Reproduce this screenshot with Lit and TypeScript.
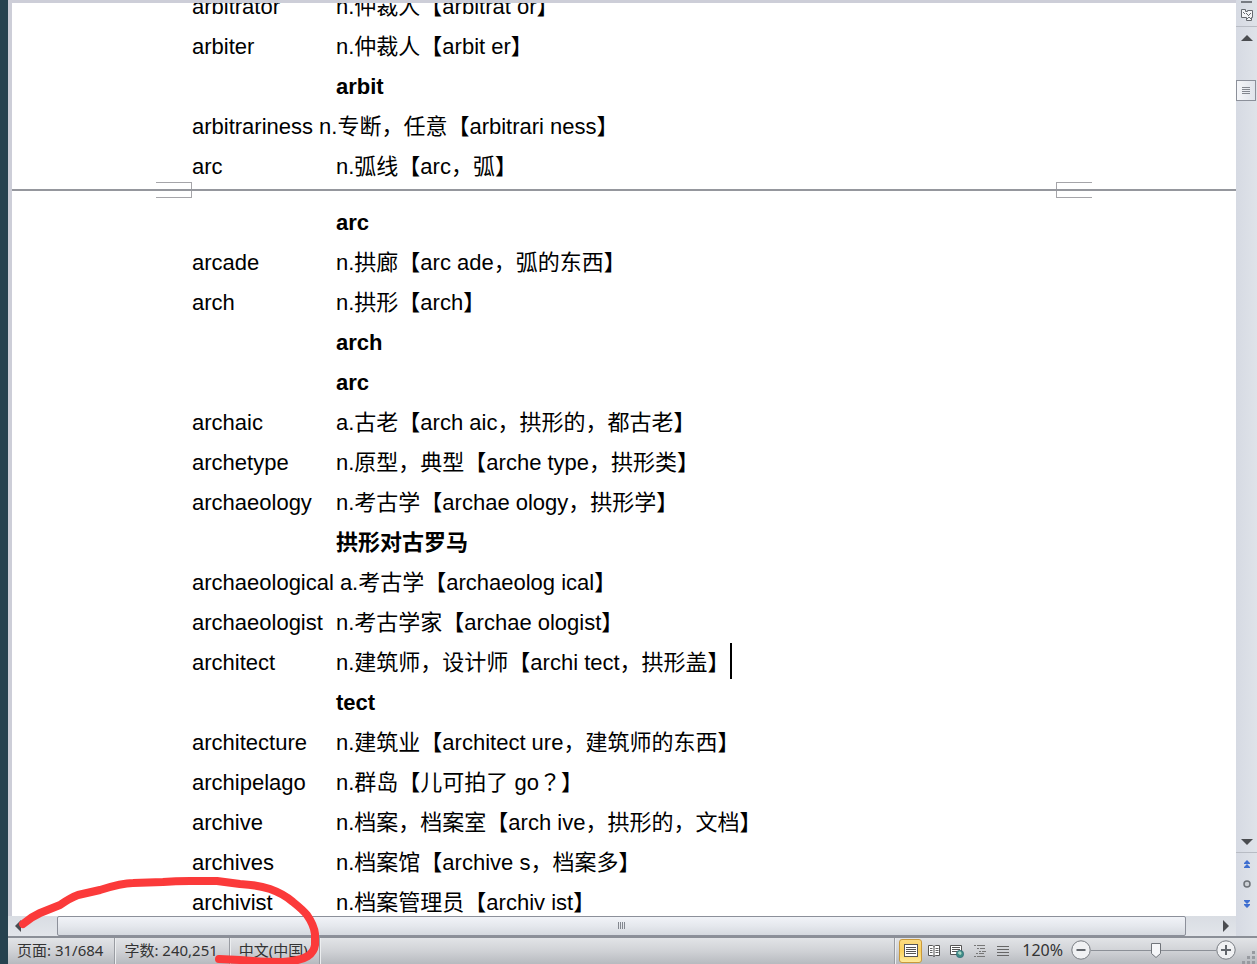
import { LitElement, html, css, svg } from "lit";
import { customElement, state } from "lit/decorators.js";

interface Entry {
  word?: string;
  meaning: string;
}

const PAGE_ONE: Entry[] = [
  { word: "arbitrator", meaning: "n.仲裁人【arbitrat or】" },
  { word: "arbiter", meaning: "n.仲裁人【arbit er】" },
  { meaning: "arbit" },
  { word: "arbitrariness", meaning: "n.专断，任意【arbitrari ness】" },
  { word: "arc", meaning: "n.弧线【arc，弧】" },
];

const PAGE_TWO: Entry[] = [
  { meaning: "arc" },
  { word: "arcade", meaning: "n.拱廊【arc ade，弧的东西】" },
  { word: "arch", meaning: "n.拱形【arch】" },
  { meaning: "arch" },
  { meaning: "arc" },
  { word: "archaic", meaning: "a.古老【arch aic，拱形的，都古老】" },
  { word: "archetype", meaning: "n.原型，典型【arche type，拱形类】" },
  { word: "archaeology", meaning: "n.考古学【archae ology，拱形学】" },
  { meaning: "拱形对古罗马" },
  { word: "archaeological", meaning: "a.考古学【archaeolog ical】" },
  { word: "archaeologist", meaning: "n.考古学家【archae ologist】" },
  { word: "architect", meaning: "n.建筑师，设计师【archi tect，拱形盖】" },
  { meaning: "tect" },
  { word: "architecture", meaning: "n.建筑业【architect ure，建筑师的东西】" },
  { word: "archipelago", meaning: "n.群岛【儿可拍了 go？】" },
  { word: "archive", meaning: "n.档案，档案室【arch ive，拱形的，文档】" },
  { word: "archives", meaning: "n.档案馆【archive s，档案多】" },
  { word: "archivist", meaning: "n.档案管理员【archiv ist】" },
];

/* Words followed by a plain space instead of a tab stop. */
const UNTABBED = new Set(["arbitrariness", "archaeological"]);

const VIEWS = [
  {
    label: "页面视图",
    icon: svg`<rect x="1.5" y="1.5" width="13" height="12" fill="#fff" stroke="#555"/>
      <path d="M3 4.5h10M3 6.5h10M3 8.5h10M3 10.5h10" stroke="#555"/>`,
  },
  {
    label: "阅读版式",
    icon: svg`<path d="M2.500 2.500h4l1.500 1 1.500-1h4v10h-4l-1.500 1-1.500-1h-4zM8 3.500v10" fill="#fff" stroke="#555"/>
      <path d="M4 5.500h2.500M4 7.500h2.500M4 9.500h2.500M9.500 5.500h3M9.500 7.500h3M9.500 9.500h3" stroke="#666"/>`,
  },
  {
    label: "Web 版式",
    icon: svg`<path d="M1.500 2.500h11v9h-11z" fill="#fff" stroke="#555"/>
      <path d="M3 4.500h8M3 6.500h8M3 8.500h5" stroke="#555"/>
      <circle cx="11" cy="11" r="3.700" fill="#3f8c86" stroke="#2c6573" stroke-width=".6"/>
      <path d="M8.500 10q2-3 3.500-1t-1 3z" fill="#a8d6c4"/>`,
  },
  {
    label: "大纲视图",
    icon: svg`<path d="M2 2.500h2M5 2.500h8M5 5.500h2M8 5.500h5M7 8.500h2M10 8.500h4M4 10.500h2M7 10.500h5M2 13.500h2M5 13.500h8" stroke="#777"/>`,
  },
  {
    label: "草稿",
    icon: svg`<path d="M2 3.500h12M2 6.500h12M2 9.500h12M2 12.500h12" stroke="#666"/>`,
  },
];

@customElement("app-root")
export class AppRoot extends LitElement {
  static styles = css`
    :host {
      display: block;
      height: 100vh;
      overflow: hidden;
      font-family: "Liberation Sans", "Noto Sans CJK SC", sans-serif;
      color: #000;
    }
    button {
      margin: 0;
      padding: 0;
      border: 0;
      background: none;
      display: flex;
      align-items: center;
      justify-content: center;
      font: inherit;
      color: inherit;
    }
    svg {
      display: block;
    }
    .desktop {
      height: 100%;
      box-sizing: border-box;
      padding-left: 8px;
      background: #26424f;
      position: relative;
    }
    .window {
      height: 100%;
      display: flex;
      flex-direction: column;
      background: #cdced8;
    }
    .work {
      flex: 1;
      min-height: 0;
      display: flex;
      border-bottom: 2px solid #8b8f97;
    }
    .pane {
      flex: 1;
      min-width: 0;
      display: flex;
      flex-direction: column;
    }
    .viewport {
      flex: 1;
      min-height: 0;
      overflow: hidden;
      margin: 3px 0 0 4px;
      background: #fff;
    }
    .pages {
      margin-top: -16px;
      font-size: 22px;
      line-height: 40px;
      white-space: nowrap;
    }
    .list {
      margin: 0;
      padding-left: 180px;
    }
    .row {
      display: flex;
      gap: 6px;
      height: 40px;
    }
    .word {
      min-width: 138px;
    }
    .word.untabbed {
      min-width: 0;
    }
    .meaning {
      margin: 0;
      display: flex;
    }
    .note {
      font-weight: bold;
    }
    .centred {
      font-family: "Noto Sans CJK TC", sans-serif;
      line-height: 22px;
    }
    .caret {
      width: 2px;
      height: 36px;
      background: #000;
    }
    .break {
      height: 16px;
      position: relative;
    }
    .rule {
      position: absolute;
      left: 0;
      right: 0;
      top: 2px;
      height: 2px;
      background: #95979d;
    }
    .corner {
      position: absolute;
      top: -5px;
      width: 35px;
      height: 14px;
      border: 1px solid #a5a5a9;
    }
    .corner.start {
      left: 144px;
      border-left: 0;
    }
    .corner.end {
      right: 144px;
      border-right: 0;
    }
    .hbar {
      height: 20px;
      display: flex;
      background: linear-gradient(#d9dde3, #e2e5ea);
    }
    .hbar .arrow {
      width: 20px;
    }
    .htrack {
      flex: 1;
      padding: 0 30px 0 29px;
      display: flex;
    }
    .htrack .thumb {
      flex: 1;
      border-radius: 2px;
      background: linear-gradient(#f1f3f8, #e5e8ed 50%, #d5d9df);
    }
    .thumb {
      box-sizing: border-box;
      border: 1px solid #8c909a;
      display: flex;
      align-items: center;
      justify-content: center;
    }
    .vbar {
      width: 21px;
      display: flex;
      flex-direction: column;
      background: linear-gradient(90deg, #d6dae3, #dfe3e9);
    }
    .split {
      height: 3px;
      background: #777b82 content-box;
      padding: 1px 5px 0;
      box-sizing: border-box;
    }
    .ruler {
      height: 24px;
      border-bottom: 1px solid #b8bcc4;
      box-sizing: border-box;
    }
    .vbar .arrow {
      height: 21px;
    }
    .vtrack {
      flex: 1;
      padding-top: 32px;
    }
    .vtrack .thumb {
      width: 20px;
      height: 21px;
      background: linear-gradient(90deg, #f5f6f9, #e0e4eb);
    }
    .browse {
      border-top: 1px solid #b8bcc4;
      height: 84px;
      padding-top: 1px;
      box-sizing: border-box;
    }
    .browse button {
      width: 100%;
      height: 20px;
    }
    .status {
      height: 26px;
      display: flex;
      background: linear-gradient(#e2e4e7, #d0d2d6 50%, #b7babf);
      font-family: "Noto Sans", "Noto Sans CJK SC", sans-serif;
      font-size: 15px;
      line-height: 24px;
      color: #333;
      white-space: nowrap;
    }
    .cell {
      padding: 0 11px 0 9px;
      border-right: 1px solid #999ca2;
      box-shadow: 1px 0 #eceef0;
    }
    .fill {
      flex: 1;
      border-right: 1px solid #999ca2;
      box-shadow: 1px 0 #eceef0;
    }
    .views {
      display: flex;
      padding-left: 4px;
    }
    .view {
      width: 23px;
      height: 24px;
      margin-top: 1px;
      box-sizing: border-box;
    }
    .view.on {
      border: 1px solid #c9993a;
      border-radius: 3px;
      background: linear-gradient(#fbdc82, #fbd25e 50%, #fdea9b);
    }
    .percent {
      padding: 0 8px;
      font-size: 16px;
    }
    .zoom {
      display: flex;
      height: 24px;
      align-items: center;
    }
    .range {
      appearance: none;
      width: 125px;
      height: 20px;
      margin: 0;
      background: linear-gradient(#8c9097, #8c9097) center / 100% 1px no-repeat;
    }
    .range::-webkit-slider-thumb {
      appearance: none;
      width: 12px;
      height: 17px;
      background: url("data:image/svg+xml,%3Csvg xmlns='http://www.w3.org/2000/svg' width='12' height='17'%3E%3Cpath d='M1.5 1.5h9v10l-4.500 4-4.500-4z' fill='%23f5f6f8' stroke='%2370747a'/%3E%3C/svg%3E") no-repeat;
    }
    .grip {
      width: 21px;
      display: flex;
      align-items: flex-end;
      justify-content: flex-end;
    }
    .ink {
      position: absolute;
      left: 0;
      bottom: 0;
      pointer-events: none;
    }
  `;

  @state() private view = 0;
  @state() private zoom = 120;

  private meaning(text: string) {
    const [before, after] = text.split("？");
    return after === undefined
      ? html`<span>${text}</span>`
      : html`<span>${before}<span class="centred">？</span>${after}</span>`;
  }

  private row(entry: Entry) {
    if (!entry.word) {
      return html`<div class="row">
        <dt class="word"></dt>
        <dd class="meaning note">${entry.meaning}</dd>
      </div>`;
    }
    return html`<div class="row">
      <dt class="word ${UNTABBED.has(entry.word) ? "untabbed" : ""}">${entry.word}</dt>
      <dd class="meaning">
        ${this.meaning(entry.meaning)}${entry.word === "architect" ? html`<span class="caret"></span>` : ""}
      </dd>
    </div>`;
  }

  private arrow(label: string, d: string) {
    return html`<button class="arrow" aria-label=${label}>
      <svg width="12" height="12"><path d=${d} fill="#4a4c50" /></svg>
    </button>`;
  }

  render() {
    return html`
      <div class="desktop">
        <div class="window">
          <div class="work">
            <div class="pane">
              <main class="viewport">
                <div class="pages">
                  <dl class="list">${PAGE_ONE.map((e) => this.row(e))}</dl>
                  <div class="break">
                    <span class="corner start"></span>
                    <span class="corner end"></span>
                    <span class="rule"></span>
                  </div>
                  <dl class="list">${PAGE_TWO.map((e) => this.row(e))}</dl>
                </div>
              </main>
              <div class="hbar">
                ${this.arrow("向左", "M9 0v12L3 6z")}
                <div class="htrack">
                  <div class="thumb">
                    <svg width="8" height="8"><path d="M.5 0v7M2.500 0v7M4.500 0v7M6.500 0v7" stroke="#83878f" /></svg>
                  </div>
                </div>
                ${this.arrow("向右", "M3 0v12L9 6z")}
              </div>
            </div>
            <div class="vbar">
              <div class="split"></div>
              <button class="ruler" aria-label="标尺">
                <svg width="14" height="14" fill="#f4f5f7" stroke="#666a70">
                  <path d="M1.500 1.500h4v2h2v-1h5v7h-1v3h-5v-3h-5z" />
                  <path d="M3 4l2 2M6 5l2 2M8 8l3-3M7 11l2-2 2 2" fill="none" />
                </svg>
              </button>
              ${this.arrow("向上", "M0 9h12L6 3z")}
              <div class="vtrack">
                <div class="thumb">
                  <svg width="8" height="8"><path d="M0 .5h8M0 2.500h8M0 4.500h8M0 6.500h8" stroke="#83878f" /></svg>
                </div>
              </div>
              ${this.arrow("向下", "M0 3h12L6 9z")}
              <div class="browse">
                <button aria-label="前一页">
                  <svg width="8" height="10" fill="#3f6fd0"><path d="M4 1l3 3v1H1V4zM4 5l3 3v1H1V8z" /></svg>
                </button>
                <button aria-label="选择浏览对象">
                  <svg width="10" height="10"><circle cx="5" cy="5" r="3" fill="#ccd0d5" stroke="#6d7177" stroke-width="1.500" /></svg>
                </button>
                <button aria-label="下一页">
                  <svg width="8" height="10" fill="#3f6fd0"><path d="M4 5L1 2V1h6v1zM4 9L1 6V5h6v1z" /></svg>
                </button>
              </div>
            </div>
          </div>
          <footer class="status">
            <span class="cell">页面: 31/684</span>
            <span class="cell">字数: 240,251</span>
            <span class="cell">中文(中国)</span>
            <span class="fill"></span>
            <div class="views">
              ${VIEWS.map(
                (v, i) => html`<button
                  class="view ${i === this.view ? "on" : ""}"
                  aria-label=${v.label}
                  @click=${() => (this.view = i)}
                >
                  <svg width="16" height="16" fill="none">${v.icon}</svg>
                </button>`
              )}
            </div>
            <label class="percent" for="zoom">${this.zoom}%</label>
            <div class="zoom">
              <button aria-label="缩小" @click=${() => (this.zoom -= 10)}>
                <svg width="20" height="20" fill="#f0f1f3" stroke="#777b81">
                  <circle cx="10" cy="10" r="9.200" />
                  <path d="M5.500 10h9" stroke="#62666c" stroke-width="2" />
                </svg>
              </button>
              <input
                class="range"
                id="zoom"
                type="range"
                min="10"
                max="220"
                .value=${String(this.zoom)}
                @input=${(e: Event) => (this.zoom = Number((e.target as HTMLInputElement).value))}
              />
              <button aria-label="放大" @click=${() => (this.zoom += 10)}>
                <svg width="20" height="20" fill="#f0f1f3" stroke="#777b81">
                  <circle cx="10" cy="10" r="9.200" />
                  <path d="M5 10h10M10 5v10" stroke="#62666c" stroke-width="2" />
                </svg>
              </button>
            </div>
            <span class="grip">
              <svg width="15" height="15" fill="#979aa0">
                <path d="M10 2h3v3h-3zM5 7h3v3h-3zM10 7h3v3h-3zM0 12h3v3H0zM5 12h3v3H5zM10 12h3v3h-3z" />
              </svg>
            </span>
          </footer>
        </div>
        <svg class="ink" width="330" height="94" fill="none" stroke="#fb3a3a" stroke-width="8" stroke-linecap="round" stroke-linejoin="round">
          <path d="M23 54Q31 47 40 43L60 35Q70 28 78 25L100 20Q122 13 133 13L163 12Q175 11 190 11L217 11L240 14Q258 15 270 19Q284 24 293 32Q303 40 307 45Q314 55 315 64V75Q314 82 308 86Q300 91 283 92Q262 92 253 91L240 90L219 89" />
        </svg>
      </div>
    `;
  }
}
